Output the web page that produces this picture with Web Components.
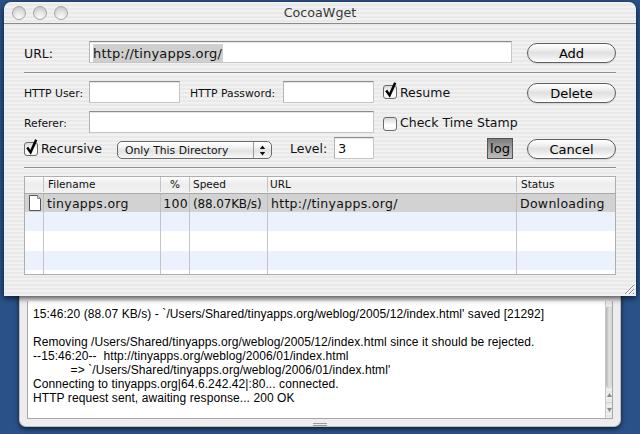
<!DOCTYPE html>
<html><head><meta charset="utf-8">
<style>
html,body{margin:0;padding:0;width:640px;height:434px;overflow:hidden;background:#2a5289;}
body{position:relative;font-family:"DejaVu Sans",sans-serif;}
</style></head><body>
<log-drawer></log-drawer>
<mac-window title-text="CocoaWget">
  <form-row style="margin-top:17px">
    <form-label width="65" tall>URL:</form-label>
    <mac-field width="423" selected>http://tinyapps.org/</mac-field>
    <mac-button style="margin:2px 0 0 15px">Add</mac-button>
  </form-row>
  <mac-sep style="margin-top:9px"></mac-sep>
  <form-row style="margin-top:8px">
    <form-label width="65" small>HTTP User:</form-label>
    <mac-field width="91"></mac-field>
    <form-label width="93" small style="margin-left:10px">HTTP Password:</form-label>
    <mac-field width="91"></mac-field>
    <mac-check checked style="margin-left:9px;width:144px;--bt:4px">Resume</mac-check>
    <mac-button style="margin:2px 0 0 0">Delete</mac-button>
  </form-row>
  <form-row style="margin-top:8px">
    <form-label width="65" small>Referer:</form-label>
    <mac-field width="285"></mac-field>
    <mac-check style="margin-left:9px;--bt:6px">Check Time Stamp</mac-check>
  </form-row>
  <form-row style="margin-top:4px">
    <mac-check checked style="width:93px;--bt:5px">Recursive</mac-check>
    <mac-select>Only This Directory</mac-select>
    <form-label width="44" style="margin-left:18px">Level:</form-label>
    <mac-field width="40" short>3</mac-field>
    <log-toggle style="margin-left:113px">log</log-toggle>
    <mac-button style="margin:2px 0 0 14px">Cancel</mac-button>
  </form-row>
  <mac-sep style="margin-top:8px"></mac-sep>
  <download-table style="margin-top:8px"></download-table>
</mac-window>
<template id="tpl-window">
<style>
:host{display:block;position:absolute;left:4px;top:2px;width:632px;height:294px;border-radius:7px 7px 0 0;
 background:repeating-linear-gradient(#f1f1f1 0 2px,#e9e9e9 2px 4px);box-shadow:0 2px 6px rgba(0,0,0,.75);color:#000;}
.title{height:21px;border-bottom:1px solid #8a8a8a;display:flex;align-items:center;justify-content:center;position:relative;
 font-size:12.7px;color:#3a3a3a;border-radius:7px 7px 0 0;}
.lights{position:absolute;left:8px;top:4px;display:flex;gap:7px;}
.lights i{display:block;width:14px;height:14px;border-radius:50%;box-sizing:border-box;border:1px solid #a6a6a6;
 background:radial-gradient(circle at 50% 85%,#fafafa 0,#e4e4e4 45%,#bdbdbd 100%);}
.body{padding:0 20px;}
svg{position:absolute;right:1px;bottom:1px;}
</style>
<div class="title"><div class="lights"><i></i><i></i><i></i></div><span id="t"></span></div>
<div class="body"><slot></slot></div>
<svg width="11" height="11" viewBox="0 0 11 11" fill="none" stroke-width="1"><path d="M1 10L10 1M5 10L10 5M9 10L10 9" stroke="#8c8c8c"/><path d="M2 10L10 2M6 10L10 6" stroke="#fff"/></svg>
</template>
<template id="tpl-row"><style>:host{display:flex;align-items:flex-start;height:22px;}</style><slot></slot></template>
<template id="tpl-label"><style>:host{display:block;height:22px;line-height:24px;font-size:12.5px;color:#111;white-space:nowrap;box-sizing:border-box;}
:host([tall]){line-height:26px;}
:host([small]){font-size:10.8px;line-height:26px;}</style><slot></slot></template>
<template id="tpl-field"><style>
:host{display:block;height:22px;box-sizing:border-box;background:#fff;border:1px solid #c6c6c6;border-top:1px solid #8c8c8c;border-left-color:#b4b4b4;
 font-size:13px;line-height:21px;padding-left:3px;white-space:nowrap;color:#111;box-shadow:inset 0 1px 0 #e4e4e4;letter-spacing:.17px;}
:host([selected]) span{background:#cfcfcf;display:inline-block;height:18px;line-height:19px;margin-top:2px;padding-right:1px;vertical-align:top;}
</style><span><slot></slot></span></template>
<template id="tpl-button"><style>
:host{display:flex;align-items:center;justify-content:center;width:89px;height:20px;box-sizing:border-box;border:1px solid #5f5f5f;border-radius:10px;
 background:linear-gradient(#fff 0,#f6f6f6 20%,#e0e0e0 50%,#e9e9e9 68%,#fff 100%);font-size:13px;color:#000;
 box-shadow:0 1px 1px rgba(0,0,0,.12);}
</style><slot></slot></template>
<template id="tpl-check"><style>
:host{display:flex;align-items:flex-start;height:22px;font-size:12.5px;color:#111;white-space:nowrap;}
.b{position:relative;width:14px;height:14px;margin:var(--bt,4px) 3px 0 0;box-sizing:border-box;border:1px solid #6c6c6c;border-radius:3px;background:linear-gradient(#d8d8d8,#fff 60%,#f4f4f4);flex:none;}
svg{position:absolute;left:0;top:-4px;overflow:visible;}
span{line-height:24px;}
</style><div class="b"><svg width="14" height="16" viewBox="0 0 14 16" fill="none" id="m"><path d="M2.2 8.5L5.6 13.2L11.2 .8" stroke="#000" stroke-width="2.5"/></svg></div><span><slot></slot></span></template>
<template id="tpl-select"><style>
:host{display:flex;width:155px;height:18px;margin-top:4px;box-sizing:border-box;border:1px solid #6a6a6a;border-radius:5px;
 background:linear-gradient(#fff 0,#f4f4f4 30%,#e2e2e2 55%,#f8f8f8 100%);font-size:10.8px;line-height:17px;color:#111;overflow:hidden;}
.t{flex:1;padding-left:7px;white-space:nowrap;}
.a{width:17px;border-left:1px solid #9a9a9a;display:flex;align-items:center;justify-content:center;}
</style><div class="t"><slot></slot></div><div class="a"><svg width="7" height="11" viewBox="0 0 7 11"><path d="M3.5 0.5L6.2 4H.8zM3.5 10.5L6.2 7H.8z" fill="#111"/></svg></div></template>
<template id="tpl-log"><style>
:host{display:flex;align-items:center;justify-content:center;width:26px;height:21px;margin-top:1px;box-sizing:border-box;border:1px solid #555;
 background:linear-gradient(#7c7c7c,#a2a2a2 50%,#bcbcbc);font-size:13px;color:#000;}
</style><slot></slot></template>
<template id="tpl-sep"><style>:host{display:block;height:1px;background:#8e8e8e;box-shadow:0 1px 0 #f8f8f8;}</style></template>
<template id="tpl-table"><style>
:host{display:block;width:592px;height:99px;box-sizing:border-box;border:1px solid #aeaeae;background:#fff;font-size:12.5px;color:#111;overflow:hidden;}
.r{display:grid;grid-template-columns:19px 117px 29px 78px 249px 1fr;white-space:nowrap;}
.r>div{box-sizing:border-box;border-right:1px solid #c4c4c4;padding-left:3px;overflow:hidden;}
.r>div:last-child{border-right:0;}
.h{height:16px;border-bottom:1px solid #a8a8a8;background:linear-gradient(#fdfdfd,#ececec 45%,#f3f3f3 100%);font-size:10.5px;line-height:15px;}
.h>div{height:15px;}
.s{height:18px;background:#d2d2d2;line-height:19px;letter-spacing:.3px;}
.s>div{border-right-color:#bdbdbd;height:18px;}
.n{height:19.3px;}
.n>div{height:100%;}
.b{background:#ebf1fd;}
.c{text-align:center;padding-left:0 !important;}
.p{padding-left:0 !important;text-align:right;padding-right:1px;}
svg{display:block;margin:1px 0 0 3px;}
.i{padding-left:0 !important;}
.st{padding-left:3px !important;}
.hs{padding-left:4px !important;}
.sp{padding-left:3px !important;font-size:12px;line-height:20px;letter-spacing:-.15px;}
</style>
<div class="r h"><div></div><div style="padding-left:4px">Filename</div><div class="c">%</div><div style="padding-left:3px">Speed</div><div style="padding-left:2px">URL</div><div class="hs">Status</div></div>
<div class="r s"><div class="i"><svg width="14" height="16" viewBox="0 0 14 16"><path d="M1.5.5H9.5L12.5 3.5V15.5H1.5z" fill="#fff" stroke="#555"/><path d="M9.5.5V3.5H12.5" fill="#ddd" stroke="#888"/></svg></div><div>tinyapps.org</div><div class="p">100</div><div class="sp">(88.07KB/s)</div><div>http://tinyapps.org/</div><div class="st">Downloading</div></div>
<div class="r n b"><div></div><div></div><div></div><div></div><div></div><div></div></div>
<div class="r n"><div></div><div></div><div></div><div></div><div></div><div></div></div>
<div class="r n b"><div></div><div></div><div></div><div></div><div></div><div></div></div>
<div class="r n"><div></div><div></div><div></div><div></div><div></div><div></div></div>
</template>
<template id="tpl-drawer"><style>
:host{display:block;position:absolute;left:19px;top:290px;width:602px;height:137px;box-sizing:border-box;padding:11px 7px 7px 7px;border-radius:0 0 7px 7px;
 background:#ededed;border:1px solid #bdbdbd;border-top:0;box-shadow:0 2px 5px rgba(0,0,0,.65);}
.box{display:flex;height:100%;box-sizing:border-box;border:1px solid #a8a8a8;border-top:0;background:#fff;}
pre{flex:1;margin:0;padding:6px 5px 0 5px;font:12px/14px "Liberation Sans",Arial,sans-serif;letter-spacing:.08px;color:#000;white-space:pre;overflow:hidden;}
.sb{width:6px;border-left:1px solid #c8c8c8;background:repeating-linear-gradient(#f0f0f0 0 2px,#e6e6e6 2px 4px);display:flex;flex-direction:column;}
.th{height:82px;margin-top:5px;background:linear-gradient(90deg,#b4b4b4,#e2e2e2 55%,#d4d4d4);border-radius:4px 2px 4px 4px;}
.ar{height:14px;display:flex;align-items:center;justify-content:center;border-bottom:1px solid #d0d0d0;}
.ar.l{border-bottom:0}
.grip{position:absolute;left:293px;bottom:0;width:14px;height:3px;border-top:1px solid #9a9a9a;border-bottom:1px solid #9a9a9a;box-sizing:border-box;}
</style><div class="box"><pre>15:46:20 (88.07 KB/s) - `/Users/Shared/tinyapps.org/weblog/2005/12/index.html' saved [21292]

Removing /Users/Shared/tinyapps.org/weblog/2005/12/index.html since it should be rejected.
--15:46:20--  http://tinyapps.org/weblog/2006/01/index.html
           => `/Users/Shared/tinyapps.org/weblog/2006/01/index.html'
Connecting to tinyapps.org|64.6.242.42|:80... connected.
HTTP request sent, awaiting response... 200 OK</pre><div class="sb"><div class="th"></div><div class="ar"><svg width="5" height="4" viewBox="0 0 5 4"><path d="M2.5 0L5 4H0z" fill="#8a8a8a"/></svg></div><div class="ar l"><svg width="5" height="4" viewBox="0 0 5 4"><path d="M2.5 4L5 0H0z" fill="#8a8a8a"/></svg></div></div></div><div class="grip"></div></template>
<script>
function def(name,tpl,init){customElements.define(name,class extends HTMLElement{constructor(){super();this.attachShadow({mode:'open'}).appendChild(document.getElementById(tpl).content.cloneNode(true));}
connectedCallback(){if(init)init(this,this.shadowRoot);}});}
def('mac-window','tpl-window',(e,s)=>{s.getElementById('t').textContent=e.getAttribute('title-text');});
def('form-row','tpl-row');
def('form-label','tpl-label',(e)=>{e.style.width=e.getAttribute('width')+'px';});
def('mac-field','tpl-field',(e)=>{e.style.width=e.getAttribute('width')+'px';});
def('mac-button','tpl-button');
def('mac-check','tpl-check',(e,s)=>{if(!e.hasAttribute('checked'))s.getElementById('m').style.display='none';});
def('mac-select','tpl-select');
def('log-toggle','tpl-log');
def('mac-sep','tpl-sep');
def('download-table','tpl-table');
def('log-drawer','tpl-drawer');
</script>
</body></html>
